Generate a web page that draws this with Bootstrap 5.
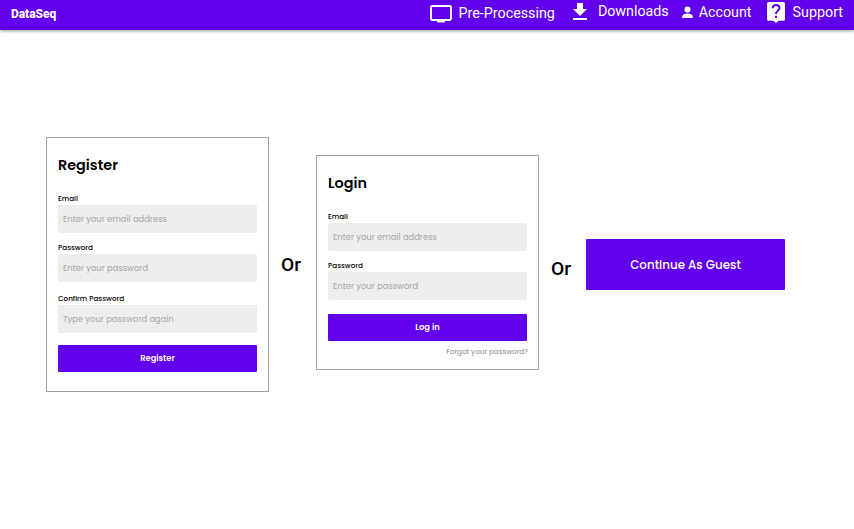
<!DOCTYPE html>
<html lang="en">
<head>
<meta charset="utf-8">
<meta name="viewport" content="width=device-width, initial-scale=1">
<title>DataSeq</title>
<link rel="stylesheet" href="https://cdn.jsdelivr.net/npm/bootstrap@5.3.0/dist/css/bootstrap.min.css">
<style>
  body { font-family: Roboto, sans-serif; color: #000; background: #fff; overflow: hidden; }
  .topbar { height: 30px; background: #6200ee; box-shadow: 0 1px 3px rgba(0,0,0,.4); padding: 0 11px; }
  .brand { font-size: 12px; font-weight: 800; line-height: 28px; letter-spacing: -.04px; }
  .menu-link { font-size: 14.3px; line-height: 16px; letter-spacing: 0; white-space: nowrap; }
  .menu-link svg { display: block; flex: none; }
  .link-pre { margin: 5px 18px 0 0; gap: 7px; }
  .link-down { margin: 3px 13px 0 0; gap: 11px; letter-spacing: -.03px; }
  .link-acc { margin: 4px 15px 0 0; gap: 6px; }
  .link-acc svg { margin-top: 1px; }
  .link-sup { margin-top: 2px; gap: 8px; }
  .link-sup span { padding-top: 2px; }
  .stage { padding-left: 46px; }
  .panel { width: 223px; border: 1px solid #a3a3a3; padding: 0 11px; font-family: Poppins, Inter, sans-serif; }
  .panel-register { height: 255px; margin-top: 107px; }
  .panel-login { height: 215px; margin-top: 125px; }
  .panel h1 { font-size: 14.4px; line-height: 20px; font-weight: 600; margin: 17px 0 19px; }
  .panel label { display: block; font-size: 7.2px; line-height: 10px; height: 11px; font-weight: 500; }
  .field { height: 28px; border: 0; border-radius: 2px; background: #ededed; padding: 1px 5px 0; font-size: 8.4px; margin-bottom: 10px; }
  .field::placeholder { color: #a6a6a6; }
  .field-gap { margin-bottom: 12px; }
  .field-last { margin-bottom: 14px; }
  .action { height: 27px; border: 0; border-radius: 1px; background: #6200ee; color: #fff; font-size: 8.3px; font-weight: 600; padding: 0; line-height: 27px; }
  .action:hover { background: #5400cc; color: #fff; }
  .forgot { font-size: 7.2px; line-height: 12px; color: #888; margin: 5px -1px 0 0; white-space: nowrap; }
  .guest { width: 199px; height: 51px; margin-top: 209px; font-family: Poppins, Inter, sans-serif; font-size: 11.9px; font-weight: 500; line-height: 52px; }
  .or { width: 47px; font-size: 19.200px; font-weight: 500; line-height: 24px; margin-top: 223px; padding-left: 12px; }
  .or-second { margin-top: 227px; }
</style>
<script src="https://cdn.jsdelivr.net/npm/bootstrap@5.3.0/dist/js/bootstrap.bundle.min.js"></script>
</head>
<body>
<header class="topbar d-flex align-items-start">
  <a class="brand text-white text-decoration-none" href="#">DataSeq</a>
  <nav class="d-flex align-items-start ms-auto">
    <a class="menu-link link-pre d-flex text-white text-decoration-none" href="#">
      <svg width="22" height="18" viewBox="0 0 22 18"><rect x="1" y="1" width="20" height="14" rx="1.2" fill="none" stroke="#fff" stroke-width="1.9"/><path d="M7 15h8v1.600q0 .8-.8.8H7.800q-.8 0-.8-.8z" fill="#fff"/></svg>
      <span>Pre-Processing</span>
    </a>
    <a class="menu-link link-down d-flex text-white text-decoration-none" href="#">
      <svg width="14" height="17" viewBox="0 0 14 17"><path d="M4 0h6v6h4L7 13 0 6h4zM0 15h14v2H0z" fill="#fff"/></svg>
      <span>Downloads</span>
    </a>
    <a class="menu-link link-acc d-flex text-white text-decoration-none" href="#">
      <svg width="11" height="14" viewBox="0 0 11 14"><circle cx="5.500" cy="4.500" r="3" fill="#fff"/><path d="M.2 13v-1.300C.2 9.400 3 8.400 5.500 8.400s5.300 1 5.300 3.300V13z" fill="#fff"/></svg>
      <span>Account</span>
    </a>
    <a class="menu-link link-sup d-flex text-white text-decoration-none" href="#">
      <svg width="18" height="21" viewBox="0 0 18 21"><path d="M1.700 0h14.600Q18 0 18 1.700v15.600q0 1.500-1.700 1.500h-4.500L9 21l-2.800-2.200H1.700Q0 18.800 0 17.300V1.700Q0 0 1.700 0z" fill="#fff"/><path d="M5.700 6.300C5.700 4 7 2.900 9 2.900s3.400 1.200 3.400 3.200C12.400 8.700 9 9 9 12" fill="none" stroke="#6200ee" stroke-width="2"/><path d="M8 13.800h2v2.200H8z" fill="#6200ee"/></svg>
      <span>Support</span>
    </a>
  </nav>
</header>
<main class="stage d-flex align-items-start">
  <form class="panel panel-register flex-shrink-0">
    <h1>Register</h1>
    <label for="r-email">Email</label>
    <input class="field d-block w-100" id="r-email" type="email" placeholder="Enter your email address">
    <label for="r-pass">Password</label>
    <input class="field field-gap d-block w-100" id="r-pass" type="password" placeholder="Enter your password">
    <label for="r-again">Confirm Password</label>
    <input class="field field-gap d-block w-100" id="r-again" type="password" placeholder="Type your password again">
    <button class="btn action d-block w-100" type="button">Register</button>
  </form>
  <div class="or flex-shrink-0">Or</div>
  <form class="panel panel-login flex-shrink-0">
    <h1>Login</h1>
    <label for="l-email">Email</label>
    <input class="field d-block w-100" id="l-email" type="email" placeholder="Enter your email address">
    <label for="l-pass">Password</label>
    <input class="field field-last d-block w-100" id="l-pass" type="password" placeholder="Enter your password">
    <button class="btn action d-block w-100" type="button">Log in</button>
    <div class="forgot text-end">Forgot your password?</div>
  </form>
  <div class="or or-second flex-shrink-0">Or</div>
  <button class="btn action guest flex-shrink-0" type="button">Continue As Guest</button>
</main>
</body>
</html>
